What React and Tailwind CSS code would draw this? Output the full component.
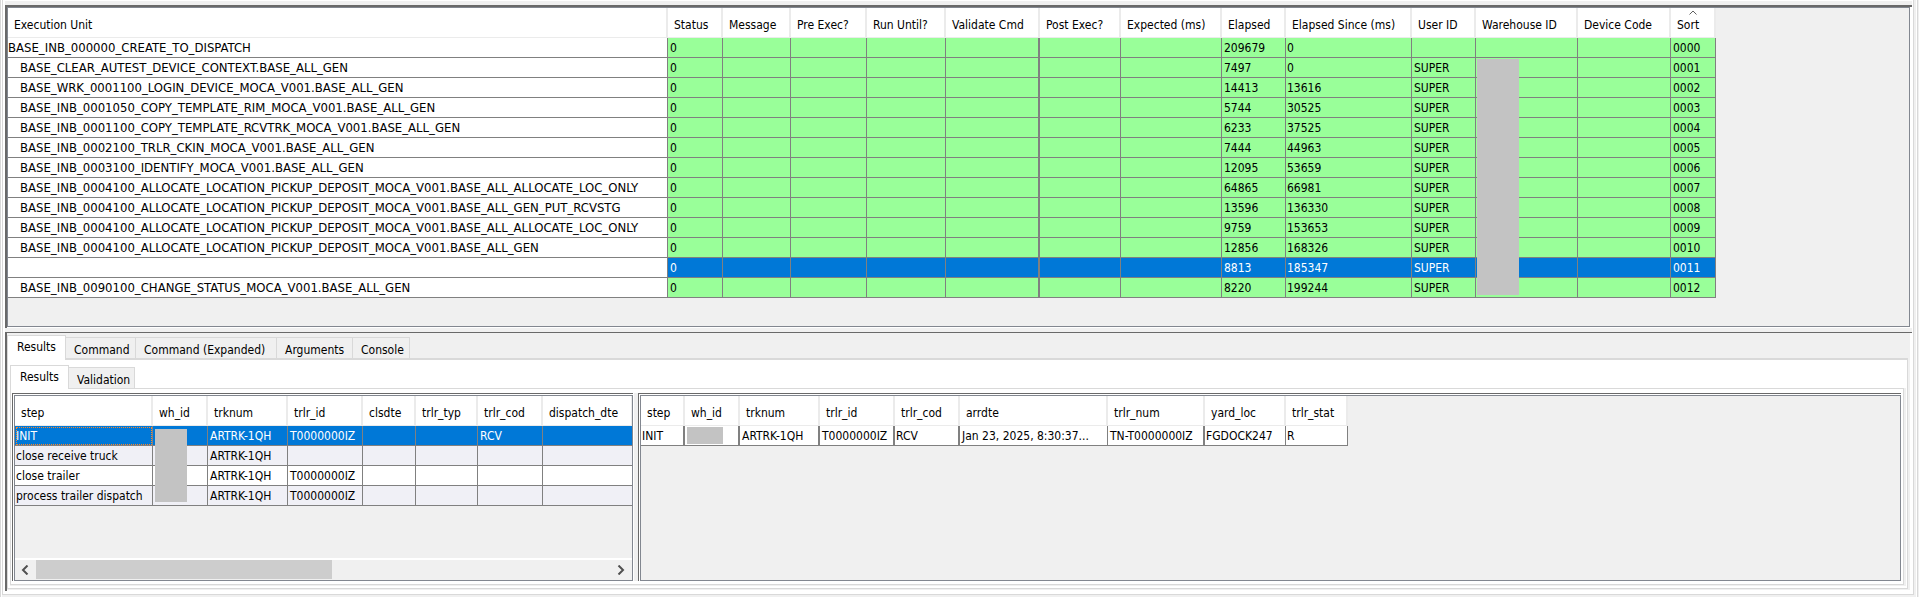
const EXEC_COLS = [
  ["Execution Unit", "w-[660px]"],
  ["Status", "w-[55px]"],
  ["Message", "w-[68px]"],
  ["Pre Exec?", "w-[76px]"],
  ["Run Until?", "w-[79px]"],
  ["Validate Cmd", "w-[94px]"],
  ["Post Exec?", "w-[81px]"],
  ["Expected (ms)", "w-[101px]"],
  ["Elapsed", "w-[64px]"],
  ["Elapsed Since (ms)", "w-[126px]"],
  ["User ID", "w-[64px]"],
  ["Warehouse ID", "w-[102px]"],
  ["Device Code", "w-[93px]"],
  ["Sort", "w-[45px]"],
];

const ALLOC = "BASE_INB_0004100_ALLOCATE_LOCATION_PICKUP_DEPOSIT_MOCA_V001.";

const EXEC_ROWS = [
  ["BASE_INB_000000_CREATE_TO_DISPATCH", "209679", "0", "", "0000"],
  ["BASE_CLEAR_AUTEST_DEVICE_CONTEXT.BASE_ALL_GEN", "7497", "0", "SUPER", "0001"],
  ["BASE_WRK_0001100_LOGIN_DEVICE_MOCA_V001.BASE_ALL_GEN", "14413", "13616", "SUPER", "0002"],
  ["BASE_INB_0001050_COPY_TEMPLATE_RIM_MOCA_V001.BASE_ALL_GEN", "5744", "30525", "SUPER", "0003"],
  ["BASE_INB_0001100_COPY_TEMPLATE_RCVTRK_MOCA_V001.BASE_ALL_GEN", "6233", "37525", "SUPER", "0004"],
  ["BASE_INB_0002100_TRLR_CKIN_MOCA_V001.BASE_ALL_GEN", "7444", "44963", "SUPER", "0005"],
  ["BASE_INB_0003100_IDENTIFY_MOCA_V001.BASE_ALL_GEN", "12095", "53659", "SUPER", "0006"],
  [ALLOC + "BASE_ALL_ALLOCATE_LOC_ONLY", "64865", "66981", "SUPER", "0007"],
  [ALLOC + "BASE_ALL_GEN_PUT_RCVSTG", "13596", "136330", "SUPER", "0008"],
  [ALLOC + "BASE_ALL_ALLOCATE_LOC_ONLY", "9759", "153653", "SUPER", "0009"],
  [ALLOC + "BASE_ALL_GEN", "12856", "168326", "SUPER", "0010"],
  ["", "8813", "185347", "SUPER", "0011"],
  ["BASE_INB_0090100_CHANGE_STATUS_MOCA_V001.BASE_ALL_GEN", "8220", "199244", "SUPER", "0012"],
];

const SELECTED_ROW = 11;
const VALIDATE_CELL = 4;
const SINCE_CELL = 8;

const STEP_COLS = [
  ["step", "w-[138px]", "pl-px"],
  ["wh_id", "w-[55px]", "pl-px"],
  ["trknum", "w-[80px]", "pl-[2px]"],
  ["trlr_id", "w-[75px]", "pl-[2px]"],
  ["clsdte", "w-[53px]", "pl-px"],
  ["trlr_typ", "w-[62px]", "pl-px"],
  ["trlr_cod", "w-[65px]", "pl-[2px]"],
  ["dispatch_dte", "w-[90px]", "pl-px"],
];

const STEP_ROWS = [
  ["INIT", "", "ARTRK-1QH", "T0000000IZ", "", "", "RCV", ""],
  ["close receive truck", "", "ARTRK-1QH", "", "", "", "", ""],
  ["close trailer", "", "ARTRK-1QH", "T0000000IZ", "", "", "", ""],
  ["process trailer dispatch", "", "ARTRK-1QH", "T0000000IZ", "", "", "", ""],
];

const DETAIL_COLS = [
  ["step", "w-[44px]", "INIT", "border-r-2 pl-px"],
  ["wh_id", "w-[55px]", "", "border-r-2 pl-px"],
  ["trknum", "w-[80px]", "ARTRK-1QH", "border-r-2 pl-[2px]"],
  ["trlr_id", "w-[75px]", "T0000000IZ", "border-r-2 pl-[2px]"],
  ["trlr_cod", "w-[65px]", "RCV", "border-r-2 pl-px"],
  ["arrdte", "w-[148px]", "Jan 23, 2025, 8:30:37...", "border-r pl-[2px]"],
  ["trlr_num", "w-[97px]", "TN-T0000000IZ", "border-r-2 pl-[2px]"],
  ["yard_loc", "w-[81px]", "FGDOCK247", "border-r pl-px"],
  ["trlr_stat", "w-[62px]", "R", "border-r pl-px"],
];

const TH = "relative h-[30px] border-r-2 border-b border-[#ebebeb] bg-white p-0 pt-1 pl-[6px] text-left align-middle font-normal";
const TD = "h-5 overflow-hidden border-b border-[#808080] p-0 pt-px leading-[18px]";

function Mask({ className }) {
  return <div aria-hidden="true" className={"absolute bg-[#c3c3c3] " + className} />;
}

function Grid({ label, width, cols, children }) {
  return (
    <table aria-label={label} className={"table-fixed border-separate border-spacing-0 " + width}>
      <colgroup>
        {cols.map(([name, w]) => <col key={name} className={w} />)}
      </colgroup>
      <thead>
        <tr>
          {cols.map(([name]) => (
            <th key={name} scope="col" className={TH}>
              {name === "Sort" && (
                <svg className="absolute top-[2px] left-[18px]" width="8" height="5" viewBox="0 0 8 5" fill="none" stroke="#606060">
                  <path d="M0.5 4.5 4 1 7.5 4.5" />
                </svg>
              )}
              {name}
            </th>
          ))}
        </tr>
      </thead>
      <tbody>{children}</tbody>
    </table>
  );
}

function ExecutionTable() {
  return (
    <div className="relative h-[318px]">
      <Grid label="Execution units" width="w-[1708px]" cols={EXEC_COLS}>
        {EXEC_ROWS.map(([unit, elapsed, since, user, sort], i) => {
          const selected = i === SELECTED_ROW;
          const fill = selected ? "bg-[#0078d7] text-white" : "bg-[#99ff99]";
          const cells = ["0", "", "", "", "", "", "", elapsed, since, user, "", "", sort];
          return (
            <tr key={sort} aria-selected={selected}>
              <td className={TD + " border-r bg-white text-[13px] " + (i === 0 ? "pl-0" : "pl-3")}>{unit}</td>
              {cells.map((c, j) => (
                <td
                  key={j}
                  className={TD + " " + fill + (j === SINCE_CELL ? " pl-px" : " pl-[2px]") + (j === VALIDATE_CELL ? " border-r-2" : " border-r")}
                >
                  {c}
                </td>
              ))}
            </tr>
          );
        })}
      </Grid>
      <Mask className="top-[51px] left-[1469px] h-[236px] w-[42px]" />
    </div>
  );
}

function StepTable() {
  return (
    <div className="relative flex-1 overflow-hidden">
      <Grid label="Steps" width="w-[618px]" cols={STEP_COLS}>
        {STEP_ROWS.map((row, i) => (
          <tr key={row[0]} className={i === 0 ? "bg-[#0078d7] text-white" : i === 2 ? "bg-white" : "bg-[#f0f0f6]"}>
            {row.map((c, j) => (
              <td
                key={j}
                className={TD + " border-r " + STEP_COLS[j][2] + (i === 0 && j === 0 ? " outline-1 -outline-offset-2 outline-dotted outline-[#ff8728]" : "")}
              >
                {c}
              </td>
            ))}
          </tr>
        ))}
      </Grid>
      <Mask className="top-[33px] left-[140px] h-[73px] w-8" />
    </div>
  );
}

function DetailTable() {
  return (
    <div className="relative flex-1">
      <Grid label="Step details" width="w-[707px]" cols={DETAIL_COLS}>
        <tr className="bg-white">
          {DETAIL_COLS.map(([name, , value, edge]) => <td key={name} className={TD + " " + edge}>{value}</td>)}
        </tr>
      </Grid>
      <Mask className="top-[31px] left-[46px] h-[17px] w-9" />
    </div>
  );
}

function ScrollBar() {
  return (
    <div className="flex h-[22px] items-stretch border-t-2 border-white bg-[#f0f0f0] pb-px">
      <button type="button" aria-label="Scroll left" className="flex w-[21px] items-center justify-center pr-[2px]">
        <svg width="8" height="10" viewBox="0 0 8 10" fill="none" stroke="#505050" strokeWidth="2"><path d="M6.5 0.5 2 5l4.5 4.5" /></svg>
      </button>
      <div className="flex flex-1"><div className="w-[296px] bg-[#cdcdcd]" /></div>
      <button type="button" aria-label="Scroll right" className="flex w-[21px] items-center justify-center pr-[2px]">
        <svg width="8" height="10" viewBox="0 0 8 10" fill="none" stroke="#505050" strokeWidth="2"><path d="M1.5 0.5 6 5l-4.5 4.5" /></svg>
      </button>
    </div>
  );
}

function Tabs({ label, items, activeClass }) {
  return (
    <div role="tablist" aria-label={label} className="flex items-end">
      {items.map(([name, w], i) => (
        <button
          key={name}
          type="button"
          role="tab"
          aria-selected={i === 0}
          className={
            w + " border-t border-r border-[#d9d9d9] text-left " +
            (i === 0 ? "relative border-l bg-white pb-[2px] pl-[9px] " + activeClass : "h-[21px] bg-[#f0f0f0] pt-1 pl-2")
          }
        >
          {name}
        </button>
      ))}
    </div>
  );
}

function Pane({ className, children }) {
  return (
    <div className={"flex border-t border-l border-[#696969] pt-px pl-px " + className}>
      <div className="flex min-w-0 flex-1 flex-col border border-[#828790] bg-[#f0f0f0]">{children}</div>
    </div>
  );
}

const OUTER_TABS = [
  ["Results", "w-[59px]"],
  ["Command", "w-[70px]"],
  ["Command (Expanded)", "w-[141px]"],
  ["Arguments", "w-[76px]"],
  ["Console", "w-[57px]"],
];

const INNER_TABS = [
  ["Results", "w-[59px]"],
  ["Validation", "w-[66px]"],
];

export default function App() {
  return (
    <div className="flex min-h-screen bg-[#f0f0f0] pr-px font-['DejaVu_Sans_Condensed','DejaVu_Sans',sans-serif] text-[12px] leading-4 whitespace-nowrap text-black">
      <div className="flex flex-1 border-x border-[#d9d9d9]">
        <div className="flex flex-1 border-x border-white pr-[2px] pb-[2px]">
          <main className="flex min-w-0 flex-1 flex-col border-x border-b border-[#d9d9d9] bg-white pt-px pr-px pb-[3px] pl-[2px]">
            <div className="h-1 bg-[#f0f0f0]" />
            <section aria-label="Execution" className="border-t-2 border-l-2 border-[#696969] pr-[2px] pb-px">
              <div className="border border-[#828790] bg-[#f0f0f0]">
                <ExecutionTable />
              </div>
            </section>
            <div className="h-1 bg-[#f0f0f0]" />
            <section aria-label="Output" className="flex flex-1 border-t border-l-2 border-[#696969] pr-[2px] pb-px">
              <div className="flex min-w-0 flex-1 flex-col bg-[#f0f0f0] pt-[2px] pr-[2px] pb-px">
                <Tabs label="Output" items={OUTER_TABS} activeClass="-mb-[2px] h-[25px]" />
                <div className="flex flex-1 flex-col border border-t-2 border-[#d9d9d9] bg-white pt-[5px] pr-px pb-[2px] pl-[2px]">
                  <div className="flex flex-1 flex-col">
                    <Tabs label="Results" items={INNER_TABS} activeClass="-mb-px h-6" />
                    <div className="flex flex-1 border-r-2 border-b border-[#f0f0f0]">
                      <div className="flex min-w-0 flex-1 border border-[#d9d9d9] pt-1 pr-[2px] pb-[3px] pl-px">
                        <Pane className="w-[621px] shrink-0">
                          <StepTable />
                          <ScrollBar />
                        </Pane>
                        <div className="ml-px w-1 bg-[#f0f0f0]" />
                        <Pane className="min-w-0 flex-1">
                          <DetailTable />
                        </Pane>
                      </div>
                    </div>
                  </div>
                </div>
              </div>
            </section>
          </main>
        </div>
      </div>
    </div>
  );
}
